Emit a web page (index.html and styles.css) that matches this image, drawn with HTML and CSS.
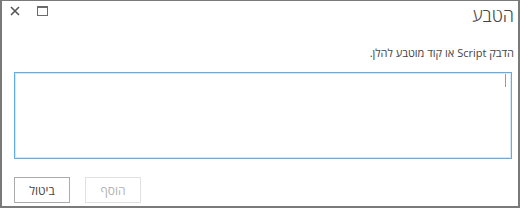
FILE: index.html
```html
<!DOCTYPE html>
<html lang="he" dir="rtl">
<head>
  <meta charset="UTF-8" />
  <meta name="viewport" content="width=device-width, initial-scale=1.0"/>
  <title>הטבע</title>
  <link rel="stylesheet" href="styles.css">
</head>
<body>
  <div class="dialog">
    <div class="titlebar">
      <h1 class="title">הטבע</h1>
      <div class="controls">
        <button class="ctl" title="הגדל">
          <svg width="11" height="10" viewBox="0 0 11 10">
            <rect x="0.5" y="0.5" width="10" height="9" fill="none" stroke="#6b6b6b" stroke-width="1"/>
            <rect x="0" y="0" width="11" height="2" fill="#6b6b6b"/>
          </svg>
        </button>
        <button class="ctl" title="סגור">
          <svg width="10" height="10" viewBox="0 0 10 10">
            <path d="M1 1 L9 9 M9 1 L1 9" stroke="#555" stroke-width="1.6" fill="none"/>
          </svg>
        </button>
      </div>
    </div>

    <p class="hint">הדבק Script או קוד מוטבע להלן.</p>

    <div class="embed-box">
      <span class="caret"></span>
    </div>

    <div class="actions">
      <button class="btn" disabled>הוסף</button>
      <button class="btn">ביטול</button>
    </div>
  </div>
</body>
</html>
```

FILE: styles.css
```css
* {
  margin: 0;
  padding: 0;
  box-sizing: border-box;
  font-family: "Open Sans", "DejaVu Sans", sans-serif;
}

body {
  width: 520px;
  height: 208px;
  background: #fff;
  overflow: hidden;
}

.dialog {
  width: 520px;
  height: 208px;
  border: 2px solid #7a7a7a;
  border-top-width: 1px;
  display: flex;
  flex-direction: column;
}

.titlebar {
  height: 34px;
  display: flex;
  justify-content: space-between;
  align-items: flex-start;
}

.title {
  font-size: 18px;
  font-weight: 300;
  line-height: 24px;
  color: #444;
  margin: 2px 4px 0 0;
}

.controls {
  display: flex;
  gap: 17px;
  padding-top: 5px;
  margin-left: 7px;
}

.ctl {
  border: none;
  background: transparent;
  width: 11px;
  height: 11px;
  display: flex;
  align-items: flex-start;
  justify-content: center;
  cursor: pointer;
}

.hint {
  font-size: 11px;
  line-height: 16px;
  color: #444;
  margin: 10px 4px 0 0;
}

.embed-box {
  margin: 11px 6px 0 12px;
  height: 87px;
  border: 1px solid #60ade8;
  box-shadow: inset 0 0 0 1px #d6e9f8;
  padding: 1px 5px 0 0;
}

.caret {
  display: block;
  width: 1px;
  height: 13px;
  background: #999;
}

.actions {
  display: flex;
  justify-content: flex-end;
  gap: 15px;
  padding: 0 0 0 12px;
  margin-top: 18px;
}

.btn {
  width: 56px;
  height: 26px;
  border: 1px solid #ababab;
  background: #fff;
  color: #444;
  font-size: 12px;
  cursor: pointer;
}

.btn:disabled {
  border-color: #e1e1e1;
  color: #b1b1b1;
  cursor: default;
}
```
